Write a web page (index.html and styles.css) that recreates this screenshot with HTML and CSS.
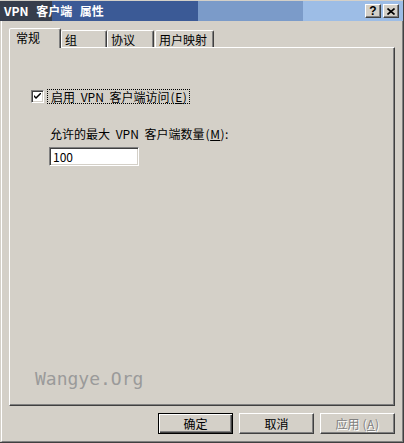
FILE: index.html
```html
<!DOCTYPE html>
<html lang="zh-CN">
<head>
<meta charset="utf-8">
<title>VPN 客户端 属性</title>
<link rel="stylesheet" href="styles.css">
</head>
<body>
<div class="window">
  <div class="titlebar">
    <span class="title-text">VPN 客户端 属性</span>
    <div class="caption-buttons">
      <div class="cbtn">?</div>
      <div class="cbtn">
        <svg width="8" height="7" viewBox="0 0 8 7"><path d="M0.5 0.5 L7.5 6.5 M7.5 0.5 L0.5 6.5" stroke="#000" stroke-width="1.6" fill="none"/></svg>
      </div>
    </div>
  </div>
  <div class="client">
    <div class="tabs">
      <div class="tab active">常规</div>
      <div class="tab">组</div>
      <div class="tab">协议</div>
      <div class="tab">用户映射</div>
    </div>
    <div class="panel">
      <div class="check-row">
        <div class="checkbox">
          <svg width="7" height="7" viewBox="0 0 7 7"><path d="M0 2 L0 4 L2 6 L7 1 L7 -1 L2 4 Z" fill="#000"/></svg>
        </div>
        <span class="focus-label">启用 VPN 客户端访问<span class="mn">(<u>E</u>)</span></span>
      </div>
      <div class="field-label">允许的最大 VPN 客户端数量<span class="mn">(<u>M</u>)</span>:</div>
      <div class="num-input">100</div>
      <div class="watermark">Wangye.Org</div>
    </div>
    <div class="buttons">
      <div class="btn default">确定</div>
      <div class="btn">取消</div>
      <div class="btn disabled">应用<span class="mn">(<u>A</u>)</span></div>
    </div>
  </div>
</div>
</body>
</html>
```
FILE: styles.css
```css
* { box-sizing: border-box; }
body {
  margin: 0;
  font-family: "Noto Sans CJK SC", "Liberation Sans", sans-serif;
  font-size: 12px;
  line-height: 14px;
  color: #000;
  background: #d4d0c8;
}
.window {
  width: 404px;
  height: 443px;
  background: #d4d0c8;
  display: flex;
  flex-direction: column;
  border-right: 1px solid #404040;
  border-bottom: 1px solid #404040;
}
.titlebar {
  margin-top: 1px;
  height: 20px;
  flex: none;
  display: flex;
  align-items: center;
  padding: 0 4px 0 4px;
  background: linear-gradient(to right, #363d4c 0 52px, #3b5a96 52px 198px, #7b9bc9 198px 303px, #9dbde6 303px);
  color: #fff;
  font-weight: bold;
}
.title-text { white-space: pre; word-spacing: 5px; }
.caption-buttons {
  margin-left: auto;
  display: flex;
  gap: 2px;
}
.cbtn {
  width: 16px;
  height: 14px;
  background: #d4d0c8;
  border: 1px solid;
  border-color: #fff #404040 #404040 #fff;
  box-shadow: inset -1px -1px #808080;
  display: flex;
  align-items: center;
  justify-content: center;
  color: #000;
  font-family: "Liberation Sans", sans-serif;
  font-weight: bold;
  font-size: 12px;
  line-height: 12px;
}
.client {
  flex: 1;
  margin-left: 1px;
  border-left: 1px solid #fff;
  border-right: 1px solid #808080;
  border-bottom: 1px solid #808080;
  padding: 7px;
  display: flex;
  flex-direction: column;
}
.tabs {
  display: flex;
  align-items: flex-end;
  height: 19px;
  flex: none;
}
.tab {
  height: 17px;
  border: 1px solid;
  border-bottom: none;
  border-color: #fff #404040 transparent #fff;
  box-shadow: inset -1px 0 #808080;
  border-radius: 2px 2px 0 0;
  padding: 2px 0 0 3px;
  white-space: nowrap;
  background: #d4d0c8;
}
.tab:nth-child(1) { width: 52px; }
.tab:nth-child(2) { width: 46px; }
.tab:nth-child(3) { width: 47px; }
.tab:nth-child(4) { width: 59px; margin-left: 1px; }
.tab.active {
  height: 20px;
  margin-bottom: -1px;
  position: relative;
  z-index: 1;
  padding-left: 6px;
}
.panel {
  height: 359px;
  flex: none;
  border: 1px solid;
  border-color: #fff #404040 #404040 #fff;
  box-shadow: inset -1px -1px #808080;
  padding: 41px 0 0 21px;
  display: flex;
  flex-direction: column;
  align-items: flex-start;
}
.check-row {
  display: flex;
  align-items: center;
  height: 15px;
}
.checkbox {
  width: 13px;
  height: 13px;
  background: #fff;
  border: 1px solid;
  border-color: #808080 #fff #fff #808080;
  box-shadow: inset 1px 1px #404040, inset -1px -1px #d4d0c8;
  display: flex;
  align-items: center;
  justify-content: center;
}
.focus-label {
  margin-left: 3px;
  border: 1px dotted #000;
  padding: 0 2px 0 3px;
  height: 15px;
  line-height: 13px;
  white-space: pre;
  word-spacing: 3px;
}
.mn { margin-left: 1px; letter-spacing: 0.5px; }
.field-label {
  margin: 23px 0 0 19px;
  white-space: pre;
  word-spacing: 3px;
}
.num-input {
  margin: 6px 0 0 18px;
  width: 90px;
  height: 19px;
  background: #fff;
  border: 1px solid;
  border-color: #808080 #fff #fff #808080;
  box-shadow: inset 1px 1px #404040, inset -1px -1px #d4d0c8;
  padding: 2px 0 0 3px;
  line-height: 14px;
}
.watermark {
  margin-top: auto;
  margin-bottom: 16px;
  margin-left: 4px;
  font-family: "DejaVu Sans Mono", monospace;
  font-size: 18px;
  line-height: 20px;
  color: #9a9a9a;
}
.buttons {
  margin-top: 7px;
  display: flex;
  justify-content: flex-end;
  gap: 6px;
  height: 21px;
  flex: none;
}
.btn {
  width: 75px;
  height: 21px;
  border: 1px solid;
  border-color: #fff #404040 #404040 #fff;
  box-shadow: inset -1px -1px #808080;
  display: flex;
  align-items: center;
  justify-content: center;
  white-space: pre;
}
.btn.default {
  border-color: #000;
  box-shadow: inset 1px 1px #fff, inset -1px -1px #404040, inset -2px -2px #808080;
}
.btn.disabled {
  color: #808080;
  text-shadow: 1px 1px #fff;
}
.btn.disabled .mn { margin-left: 3px; }
```
